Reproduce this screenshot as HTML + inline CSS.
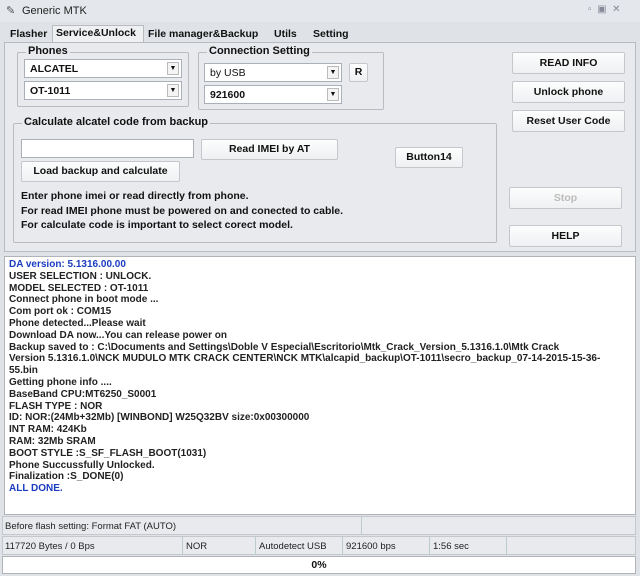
<!DOCTYPE html><html><head><style>
*{margin:0;padding:0;box-sizing:border-box}
body{width:640px;height:576px;background:#dfe3e8;font-family:"Liberation Sans",sans-serif;font-size:11px;color:#111;position:relative;overflow:hidden}
.a{position:absolute}
.btn{position:absolute;background:linear-gradient(#fdfdfd,#eef0f2);border:1px solid #c4c8cc;border-radius:2px;text-align:center;font-weight:bold;font-size:10.5px}
.grp{position:absolute;border:1px solid #b8bcc0;border-radius:2px}
.lg{position:absolute;top:-8px;left:8px;background:#e8eaed;padding:0 2px;font-weight:bold;font-size:11px}
.cb{position:absolute;background:#fff;border:1px solid #aab0b8;font-weight:bold;font-size:10.5px;padding:3px 5px}
.cb i{position:absolute;right:2px;top:2px;width:12px;height:13px;border:1px solid #bbb;background:#f4f4f4;font-style:normal;font-size:7px;text-align:center;line-height:12px}
.log div{height:11.8px;line-height:11.8px;white-space:nowrap}
.sb{position:absolute;height:18px;border-right:1px solid #bcc;font-size:9.5px;padding:4px 3px;color:#222}
</style></head><body>
<div class="a" style="left:0;top:0;width:640px;height:22px;background:#e4e7eb"></div>
<div class="a" style="left:6px;top:4px;width:10px;height:12px;font-size:11px;color:#555">✎</div>
<div class="a" style="left:22px;top:5px;font-size:11px;color:#222">Generic MTK</div>
<div class="a" style="left:588px;top:4px;font-size:10px;color:#889">▫&nbsp;&nbsp;▣&nbsp;&nbsp;✕</div>
<div class="a" style="left:52px;top:25px;width:92px;height:18px;background:#eef0f2;border:1px solid #b8bcc0;border-bottom:none"></div>
<div class="a" style="left:10px;top:28px;font-weight:bold;font-size:10.5px">Flasher</div>
<div class="a" style="left:56px;top:27px;font-weight:bold;font-size:10.5px">Service&amp;Unlock</div>
<div class="a" style="left:148px;top:28px;font-weight:bold;font-size:10.5px">File manager&amp;Backup</div>
<div class="a" style="left:274px;top:28px;font-weight:bold;font-size:10.5px">Utils</div>
<div class="a" style="left:313px;top:28px;font-weight:bold;font-size:10.5px">Setting</div>
<div class="a" style="left:4px;top:42px;width:632px;height:210px;background:#e8eaed;border:1px solid #b8bcc0"></div>
<div class="grp" style="left:17px;top:52px;width:172px;height:55px"><span class="lg">Phones</span></div>
<div class="cb" style="left:24px;top:59px;width:158px;height:19px">ALCATEL<i>▼</i></div>
<div class="cb" style="left:24px;top:81px;width:158px;height:19px">OT-1011<i>▼</i></div>
<div class="grp" style="left:198px;top:52px;width:186px;height:58px"><span class="lg">Connection Setting</span></div>
<div class="cb" style="left:204px;top:63px;width:138px;height:19px;font-weight:normal">by USB<i>▼</i></div>
<div class="cb" style="left:204px;top:85px;width:138px;height:19px">921600<i>▼</i></div>
<div class="btn" style="left:349px;top:63px;width:19px;height:19px;line-height:17px">R</div>
<div class="btn" style="left:512px;top:52px;width:113px;height:22px;line-height:20px">READ INFO</div>
<div class="btn" style="left:512px;top:81px;width:113px;height:22px;line-height:20px">Unlock phone</div>
<div class="btn" style="left:512px;top:110px;width:113px;height:22px;line-height:20px">Reset User Code</div>
<div class="grp" style="left:13px;top:123px;width:484px;height:120px"><span class="lg">Calculate alcatel code from backup</span></div>
<div class="a" style="left:21px;top:139px;width:173px;height:19px;background:#fff;border:1px solid #aab0b8"></div>
<div class="btn" style="left:201px;top:139px;width:137px;height:21px;line-height:19px">Read IMEI by AT</div>
<div class="btn" style="left:21px;top:161px;width:159px;height:21px;line-height:19px">Load backup and calculate</div>
<div class="btn" style="left:395px;top:147px;width:68px;height:21px;line-height:19px">Button14</div>
<div class="a" style="left:21px;top:189px;font-weight:bold;font-size:10.5px;line-height:14.5px">Enter phone imei or read directly from phone.<br>For read IMEI phone must be powered on and conected to cable.<br>For calculate code is important to select corect model.</div>
<div class="btn" style="left:509px;top:187px;width:113px;height:22px;line-height:20px;color:#bbb">Stop</div>
<div class="btn" style="left:509px;top:225px;width:113px;height:22px;line-height:20px">HELP</div>
<div class="a log" style="left:4px;top:256px;width:632px;height:259px;background:#fff;border:1px solid #b0b4b8;padding:2px 4px;font-size:10px;font-weight:bold;color:#222">
<div style="color:#1a3cc0">DA version: 5.1316.00.00</div><div>USER SELECTION : UNLOCK.</div><div>MODEL SELECTED : OT-1011</div><div>Connect phone in boot mode ...</div><div>Com port ok : COM15</div><div>Phone detected...Please wait</div><div>Download DA now...You can release power on</div><div>Backup saved to : C:\Documents and Settings\Doble V Especial\Escritorio\Mtk_Crack_Version_5.1316.1.0\Mtk Crack</div><div>Version 5.1316.1.0\NCK MUDULO MTK CRACK CENTER\NCK MTK\alcapid_backup\OT-1011\secro_backup_07-14-2015-15-36-</div><div>55.bin</div><div>Getting phone info ....</div><div>BaseBand CPU:MT6250_S0001</div><div>FLASH TYPE : NOR</div><div>ID: NOR:(24Mb+32Mb) [WINBOND] W25Q32BV  size:0x00300000</div><div>INT RAM: 424Kb</div><div>RAM: 32Mb SRAM</div><div>BOOT STYLE :S_SF_FLASH_BOOT(1031)</div><div>Phone Succussfully Unlocked.</div><div>Finalization :S_DONE(0)</div><div style="color:#1a3cc0">ALL DONE.</div></div>
<div class="a" style="left:2px;top:516px;width:634px;height:19px;background:#e8eaed;border:1px solid #c4c8cc"></div>
<div class="sb" style="left:2px;top:517px;width:360px">Before flash setting: Format FAT (AUTO)</div>
<div class="a" style="left:2px;top:536px;width:634px;height:19px;background:#e8eaed;border:1px solid #c4c8cc"></div>
<div class="sb" style="left:2px;top:537px;width:181px">117720 Bytes / 0 Bps</div>
<div class="sb" style="left:183px;top:537px;width:73px">NOR</div>
<div class="sb" style="left:256px;top:537px;width:87px">Autodetect USB</div>
<div class="sb" style="left:343px;top:537px;width:87px">921600 bps</div>
<div class="sb" style="left:430px;top:537px;width:77px">1:56 sec</div>
<div class="a" style="left:2px;top:556px;width:634px;height:18px;background:#fff;border:1px solid #b0b4b8;text-align:center;font-weight:bold;font-size:10.5px;line-height:16px">0%</div>
</body></html>
